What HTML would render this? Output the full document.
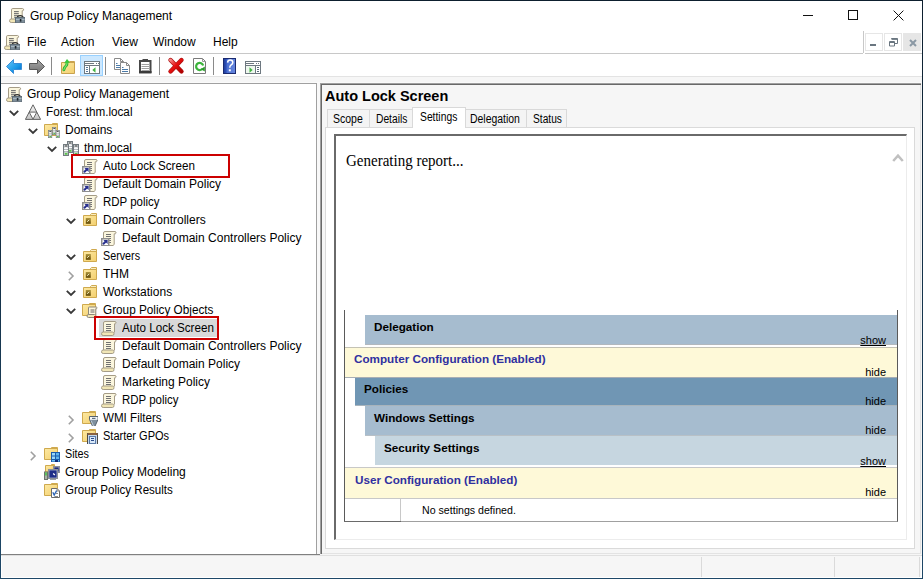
<!DOCTYPE html>
<html><head><meta charset="utf-8">
<style>
*{margin:0;padding:0;box-sizing:border-box}
html,body{width:923px;height:579px;overflow:hidden;background:#fff}
body{font-family:"Liberation Sans",sans-serif;font-size:12px;color:#000;position:relative}
.a{position:absolute}
.t{position:absolute;white-space:nowrap;line-height:14px}
svg{position:absolute;overflow:visible}
.tab{position:absolute;top:109px;height:18px;background:#f4f4f4;border:1px solid #d9d9d9;border-bottom:none}
.tt{position:absolute;white-space:nowrap;font-size:12px;line-height:14px;transform-origin:0 0}
.hd{position:absolute;white-space:nowrap;font-weight:bold;font-size:11.7px;line-height:14px}
.hs{position:absolute;white-space:nowrap;font-size:11px;line-height:13px;right:37px;text-align:right}
.u{text-decoration:underline}
</style></head><body>

<svg width="0" height="0" style="position:absolute">
<defs>
<linearGradient id="gfold" x1="0" y1="0" x2="1" y2="1"><stop offset="0" stop-color="#fde9a2"/><stop offset="1" stop-color="#f3cf6e"/></linearGradient>
<linearGradient id="gtab" x1="0" y1="0" x2="0" y2="1"><stop offset="0" stop-color="#fff8dc"/><stop offset="1" stop-color="#f0dc98"/></linearGradient>
<linearGradient id="gtri" x1="0" y1="0" x2="0" y2="1"><stop offset="0" stop-color="#f6f6f6"/><stop offset="1" stop-color="#c4c4c4"/></linearGradient>
<linearGradient id="gsrv" x1="0" y1="0" x2="1" y2="0"><stop offset="0" stop-color="#b4bcc0"/><stop offset="0.5" stop-color="#f2f4f5"/><stop offset="1" stop-color="#a4acb2"/></linearGradient>
<linearGradient id="gou" x1="0" y1="0" x2="0" y2="1"><stop offset="0" stop-color="#b09840"/><stop offset="1" stop-color="#5e4604"/></linearGradient>
<symbol id="scroll" viewBox="0 0 16 16">
 <path d="M2.5 12.5V3Q2.5 1.5 4 1.5H14Q15.5 1.8 15 3.2Q14.6 4 13.5 3.8V12.5" fill="#fbf6de" stroke="#a59c86"/>
 <rect x="0.5" y="12" width="12.5" height="3.5" rx="1.7" fill="#f1e6b6" stroke="#a59c86"/>
 <path d="M5 4.5h5M5 6.5h5M5 8.5h5M5 10.5h5" stroke="#727272"/>
</symbol>
<symbol id="link" viewBox="0 0 16 16">
 <path d="M2.5 15.5V3Q2.5 1.5 4 1.5H14Q15.5 1.8 15 3.2Q14.6 4 13.2 3.8V14.5L12 15.5Z" fill="#fbf6de" stroke="#a59c86"/>
 <path d="M5 4.5h5M5 6.5h5M8 8.5h2M8 10.5h2M8 12.5h2" stroke="#727272"/>
 <rect x="0.75" y="8.75" width="7" height="7" fill="#fff" stroke="#8e8e8e" stroke-width="1.5"/>
 <path d="M2 14.3L5 11.3" stroke="#28308e" stroke-width="2"/>
 <path d="M2.4 9.9H6.6V14.1Z" fill="#28308e"/>
</symbol>
<symbol id="folder" viewBox="0 0 16 16">
 <path d="M8.5 2.5L9.5 1.5H14.5V4H8.5Z" fill="url(#gtab)" stroke="#cfa94e"/>
 <path d="M1.5 3.5H14.5V13.5H1.5Z" fill="url(#gfold)" stroke="#cfa94e"/>
</symbol>
<symbol id="ou" viewBox="0 0 16 16">
 <use href="#folder" width="16" height="16"/>
 <rect x="3.8" y="6" width="5" height="5.8" fill="url(#gou)"/>
 <path d="M5.2 9.8L7.2 7.8" stroke="#f4ecc0" stroke-width="1"/>
</symbol>
<symbol id="srv" viewBox="0 0 6 12">
 <rect x="0.5" y="0.5" width="5" height="11" fill="url(#gsrv)" stroke="#737b80"/>
 <rect x="1.6" y="1.4" width="2.8" height="1.1" rx="0.5" fill="#262626"/>
 <path d="M1 4.3H5M1 6.5H5" stroke="#ffffff" stroke-width="1.2"/>
 <path d="M1 5.4H5M1 7.6H5" stroke="#8d969c" stroke-width="0.6"/>
 <rect x="1.8" y="8.8" width="2.6" height="2" fill="#5cc24c"/>
</symbol>
<symbol id="gpm" viewBox="0 0 16 16">
 <path d="M2.5 12.5V2.8Q2.5 1.5 3.8 1.5H13.6Q15 1.8 14.6 3.2Q14.2 4 13.2 3.8V11" fill="#fbf6de" stroke="#a59c86"/>
 <rect x="0.5" y="12" width="8" height="3.5" rx="1.7" fill="#f1e6b6" stroke="#a59c86"/>
 <path d="M5 4.6h4.8M5 6.4h4.8M5 8.3h4.8M5 10.2h3" stroke="#6a6a6a"/>
 <path d="M8.6 10.5V9.6Q11.2 7.6 13.8 9.6V10.5" stroke="#2e2e2e" stroke-width="1.2" fill="none"/>
 <rect x="6.5" y="10.5" width="9.5" height="5.3" fill="#7e8e9a" stroke="#5e6c76"/>
 <path d="M7 12.5H15.5" stroke="#a8b8c2"/>
 <rect x="10.8" y="12" width="1.6" height="2.6" fill="#1e262c"/>
</symbol>
<symbol id="forest" viewBox="0 0 16 16">
 <path d="M8 0.8L15.6 15.4H0.4Z" fill="url(#gtri)" stroke="#646464" stroke-linejoin="round"/>
 <path d="M4.2 8.1H11.8L8 15.2Z" fill="#fff" stroke="#646464"/>
</symbol>
<symbol id="domain" viewBox="0 0 16 16">
 <use href="#srv" x="4" y="1" width="6" height="12"/>
 <use href="#srv" x="0" y="4" width="6" height="12"/>
 <use href="#srv" x="10" y="4" width="6" height="12"/>
</symbol>
<symbol id="domains" viewBox="0 0 16 16">
 <path d="M7.5 2.5L8.5 1.5H13.5V4H7.5Z" fill="url(#gtab)" stroke="#cfa94e"/>
 <path d="M0.5 2.5H13.5V13.5H0.5Z" fill="url(#gfold)" stroke="#cfa94e"/>
 <use href="#srv" x="8" y="5" width="4.5" height="8"/>
 <use href="#srv" x="4" y="8" width="4.5" height="8"/>
 <use href="#srv" x="11.5" y="8" width="4.5" height="8"/>
</symbol>
<symbol id="gpofold" viewBox="0 0 16 16">
 <path d="M6.5 2.5L7.5 1.5H13.5V4.5H6.5Z" fill="url(#gtab)" stroke="#cfa94e"/>
 <path d="M0.5 2.5H13.5V13.5H0.5Z" fill="url(#gfold)" stroke="#cfa94e"/>
 <path d="M6.5 13V5.8Q6.5 5 7.3 5H14.3Q15.4 5.3 15 6.3Q14.7 6.8 13.8 6.7V13" fill="#fbf6de" stroke="#8e887a"/>
 <rect x="5" y="12.5" width="9" height="3" rx="1.5" fill="#f1e6b6" stroke="#8e887a"/>
 <path d="M8.5 8h4M8.5 10h4" stroke="#6a6a6a"/>
</symbol>
<symbol id="wmi" viewBox="0 0 16 16">
 <path d="M6.5 2.5L7.5 1.5H13.5V4.5H6.5Z" fill="url(#gtab)" stroke="#cfa94e"/>
 <path d="M0.5 2.5H13.5V13.5H0.5Z" fill="url(#gfold)" stroke="#cfa94e"/>
 <path d="M7.5 6.5H16V9.5L12.6 17H10.9L7.5 9.5Z" fill="#7f909e" stroke="#56636e" stroke-linejoin="round"/>
 <path d="M9 10.5L11.5 16" stroke="#c0ccd6" stroke-width="1"/>
 <rect x="8" y="7" width="7.5" height="2.8" fill="#f6f8fa"/>
 <path d="M10 8.4H13.5" stroke="#607080" stroke-width="1.2"/>
</symbol>
<symbol id="starter" viewBox="0 0 16 16">
 <path d="M6.5 2.5L7.5 1.5H13.5V4.5H6.5Z" fill="url(#gtab)" stroke="#cfa94e"/>
 <path d="M0.5 2.5H13.5V13.5H0.5Z" fill="url(#gfold)" stroke="#cfa94e"/>
 <rect x="5.5" y="5.5" width="10" height="11" fill="#c8d8ea" stroke="#4a4a4a"/>
 <rect x="5.5" y="5" width="10" height="2" fill="#8a6240"/>
 <rect x="7.5" y="8.5" width="6" height="7" fill="#d8e8f8" stroke="#5a7aa8"/>
 <path d="M9 10.5H12M9 12.5H12" stroke="#2a4a8a" stroke-width="1.2"/>
</symbol>
<symbol id="sites" viewBox="0 0 16 16">
 <path d="M6.5 2.5L7.5 1.5H13.5V4.5H6.5Z" fill="url(#gtab)" stroke="#cfa94e"/>
 <path d="M0.5 2.5H13.5V13.5H0.5Z" fill="url(#gfold)" stroke="#cfa94e"/>
 <rect x="7" y="6" width="9" height="10" fill="#1a5cac"/>
 <rect x="8" y="7" width="3" height="2.5" fill="#9ad8fa"/><rect x="12" y="7" width="3" height="2.5" fill="#5fb4ec"/>
 <rect x="8" y="10.5" width="3" height="2.5" fill="#9ad8fa"/><rect x="12" y="10.5" width="3" height="2.5" fill="#5fb4ec"/>
 <rect x="8" y="14" width="7" height="1.5" fill="#6cc0f0"/><rect x="11" y="14" width="3" height="2" fill="#0c2a7a"/>
</symbol>
<symbol id="model" viewBox="0 0 16 16">
 <path d="M6.5 1.5L7.5 0.5H10.5V3H6.5Z" fill="url(#gtab)" stroke="#cfa94e"/>
 <path d="M1.5 1.5H10V8H1.5Z" fill="url(#gfold)" stroke="#cfa94e"/>
 <rect x="9.5" y="2.5" width="6" height="6" fill="#c8ccd4" stroke="#8a9098"/>
 <rect x="10.3" y="3.3" width="4.4" height="4.4" fill="#1c2a78"/>
 <rect x="4.5" y="5.5" width="9" height="9" fill="#d8dce4" stroke="#8a9098"/>
 <rect x="5.3" y="6.3" width="7.4" height="7.4" fill="#1e2e88"/>
 <path d="M9.2 9.5L10.8 11" stroke="#fff" stroke-width="1.3"/>
 <path d="M6 15.5H12" stroke="#9aa0a6"/>
 <rect x="0.5" y="8" width="3" height="7.5" fill="#a8b0a8" stroke="#6c746c"/>
 <rect x="1" y="8.5" width="2" height="3" fill="#5cc05c"/>
</symbol>
<symbol id="results" viewBox="0 0 16 16">
 <path d="M6.5 2.5L7.5 1.5H13.5V4.5H6.5Z" fill="url(#gtab)" stroke="#cfa94e"/>
 <path d="M0.5 2.5H13.5V13.5H0.5Z" fill="url(#gfold)" stroke="#cfa94e"/>
 <path d="M7.5 6.5H13L15.5 9V15.5H7.5Z" fill="#fff" stroke="#6a6a6a"/>
 <path d="M13 6.5V9H15.5" fill="none" stroke="#8a8a8a"/>
 <path d="M8.8 10.2L10.2 13L12.6 8.6" stroke="#2a64b8" stroke-width="1.3" fill="none"/>
 <path d="M11.5 11.5H14M10.5 14.5H14" stroke="#8a8a8a"/>
</symbol>
</defs></svg>

<!-- window border -->
<div class="a" style="left:0;top:0;width:923px;height:1px;background:#0d1f2e"></div>
<div class="a" style="left:0;top:0;width:1px;height:579px;background:linear-gradient(#0d1f2e,#1e4868)"></div>
<div class="a" style="left:922px;top:0;width:1px;height:579px;background:linear-gradient(#0d1f2e,#1e4868)"></div>
<div class="a" style="left:0;top:578px;width:923px;height:1px;background:#1e4868"></div>
<!-- title -->
<div class="t" style="left:30px;top:9px">Group Policy Management</div>

<!-- menu -->
<div class="t" style="left:27px;top:35px">File</div>
<div class="t" style="left:61px;top:35px">Action</div>
<div class="t" style="left:112px;top:35px">View</div>
<div class="t" style="left:153px;top:35px">Window</div>
<div class="t" style="left:213px;top:35px">Help</div>
<div class="a" style="left:1px;top:53px;width:921px;height:1px;background:#c8c8c8"></div>

<!-- band -->
<div class="a" style="left:1px;top:76px;width:921px;height:7px;background:#f6f6f6;border-top:1px solid #e3e3e3;border-bottom:1px solid #fafafa"></div>

<!-- left pane -->
<div class="a" style="left:1px;top:83px;width:316px;height:472px;background:#fff;border:1px solid #a0a0a0;border-left:none"></div>
<div class="a" style="left:317px;top:83px;width:3px;height:472px;background:#f8f8f8"></div>
<div class="a" style="left:99px;top:319px;width:118px;height:18px;background:#d9d9d9"></div>
<svg style="left:6px;top:86px" width="16" height="16"><use href="#gpm" width="16" height="16"/></svg>
<div class="t" style="left:27px;top:85px;line-height:18px">Group Policy Management</div>
<svg style="left:9px;top:110px" width="11" height="7"><path d="M0.8 0.8L5 5L9.2 0.8" stroke="#383838" stroke-width="1.8" fill="none"/></svg>
<svg style="left:25px;top:104px" width="16" height="16"><use href="#forest" width="16" height="16"/></svg>
<div class="t" style="left:46px;top:103px;line-height:18px;transform:scaleX(0.975);transform-origin:0 0">Forest: thm.local</div>
<svg style="left:28px;top:128px" width="11" height="7"><path d="M0.8 0.8L5 5L9.2 0.8" stroke="#383838" stroke-width="1.8" fill="none"/></svg>
<svg style="left:44px;top:122px" width="16" height="16"><use href="#domains" width="16" height="16"/></svg>
<div class="t" style="left:65px;top:121px;line-height:18px">Domains</div>
<svg style="left:47px;top:146px" width="11" height="7"><path d="M0.8 0.8L5 5L9.2 0.8" stroke="#383838" stroke-width="1.8" fill="none"/></svg>
<svg style="left:63px;top:140px" width="16" height="16"><use href="#domain" width="16" height="16"/></svg>
<div class="t" style="left:84px;top:139px;line-height:18px">thm.local</div>
<svg style="left:82px;top:158px" width="16" height="16"><use href="#link" width="16" height="16"/></svg>
<div class="t" style="left:103px;top:157px;line-height:18px;transform:scaleX(0.97);transform-origin:0 0">Auto Lock Screen</div>
<svg style="left:82px;top:176px" width="16" height="16"><use href="#link" width="16" height="16"/></svg>
<div class="t" style="left:103px;top:175px;line-height:18px">Default Domain Policy</div>
<svg style="left:82px;top:194px" width="16" height="16"><use href="#link" width="16" height="16"/></svg>
<div class="t" style="left:103px;top:193px;line-height:18px;transform:scaleX(0.955);transform-origin:0 0">RDP policy</div>
<svg style="left:66px;top:218px" width="11" height="7"><path d="M0.8 0.8L5 5L9.2 0.8" stroke="#383838" stroke-width="1.8" fill="none"/></svg>
<svg style="left:82px;top:212px" width="16" height="16"><use href="#ou" width="16" height="16"/></svg>
<div class="t" style="left:103px;top:211px;line-height:18px">Domain Controllers</div>
<svg style="left:101px;top:230px" width="16" height="16"><use href="#link" width="16" height="16"/></svg>
<div class="t" style="left:122px;top:229px;line-height:18px">Default Domain Controllers Policy</div>
<svg style="left:66px;top:254px" width="11" height="7"><path d="M0.8 0.8L5 5L9.2 0.8" stroke="#383838" stroke-width="1.8" fill="none"/></svg>
<svg style="left:82px;top:248px" width="16" height="16"><use href="#ou" width="16" height="16"/></svg>
<div class="t" style="left:103px;top:247px;line-height:18px;transform:scaleX(0.895);transform-origin:0 0">Servers</div>
<svg style="left:68px;top:271px" width="7" height="11"><path d="M0.8 0.8L5 5L0.8 9.2" stroke="#a0a0a0" stroke-width="1.6" fill="none"/></svg>
<svg style="left:82px;top:266px" width="16" height="16"><use href="#ou" width="16" height="16"/></svg>
<div class="t" style="left:103px;top:265px;line-height:18px">THM</div>
<svg style="left:66px;top:290px" width="11" height="7"><path d="M0.8 0.8L5 5L9.2 0.8" stroke="#383838" stroke-width="1.8" fill="none"/></svg>
<svg style="left:82px;top:284px" width="16" height="16"><use href="#ou" width="16" height="16"/></svg>
<div class="t" style="left:103px;top:283px;line-height:18px">Workstations</div>
<svg style="left:66px;top:308px" width="11" height="7"><path d="M0.8 0.8L5 5L9.2 0.8" stroke="#383838" stroke-width="1.8" fill="none"/></svg>
<svg style="left:82px;top:302px" width="16" height="16"><use href="#gpofold" width="16" height="16"/></svg>
<div class="t" style="left:103px;top:301px;line-height:18px;transform:scaleX(0.98);transform-origin:0 0">Group Policy Objects</div>
<svg style="left:101px;top:320px" width="16" height="16"><use href="#scroll" width="16" height="16"/></svg>
<div class="t" style="left:122px;top:319px;line-height:18px;transform:scaleX(0.97);transform-origin:0 0">Auto Lock Screen</div>
<svg style="left:101px;top:338px" width="16" height="16"><use href="#scroll" width="16" height="16"/></svg>
<div class="t" style="left:122px;top:337px;line-height:18px">Default Domain Controllers Policy</div>
<svg style="left:101px;top:356px" width="16" height="16"><use href="#scroll" width="16" height="16"/></svg>
<div class="t" style="left:122px;top:355px;line-height:18px">Default Domain Policy</div>
<svg style="left:101px;top:374px" width="16" height="16"><use href="#scroll" width="16" height="16"/></svg>
<div class="t" style="left:122px;top:373px;line-height:18px">Marketing Policy</div>
<svg style="left:101px;top:392px" width="16" height="16"><use href="#scroll" width="16" height="16"/></svg>
<div class="t" style="left:122px;top:391px;line-height:18px;transform:scaleX(0.955);transform-origin:0 0">RDP policy</div>
<svg style="left:68px;top:415px" width="7" height="11"><path d="M0.8 0.8L5 5L0.8 9.2" stroke="#a0a0a0" stroke-width="1.6" fill="none"/></svg>
<svg style="left:82px;top:410px" width="16" height="16"><use href="#wmi" width="16" height="16"/></svg>
<div class="t" style="left:103px;top:409px;line-height:18px;transform:scaleX(0.967);transform-origin:0 0">WMI Filters</div>
<svg style="left:68px;top:433px" width="7" height="11"><path d="M0.8 0.8L5 5L0.8 9.2" stroke="#a0a0a0" stroke-width="1.6" fill="none"/></svg>
<svg style="left:82px;top:428px" width="16" height="16"><use href="#starter" width="16" height="16"/></svg>
<div class="t" style="left:103px;top:427px;line-height:18px;transform:scaleX(0.917);transform-origin:0 0">Starter GPOs</div>
<svg style="left:30px;top:451px" width="7" height="11"><path d="M0.8 0.8L5 5L0.8 9.2" stroke="#a0a0a0" stroke-width="1.6" fill="none"/></svg>
<svg style="left:44px;top:446px" width="16" height="16"><use href="#sites" width="16" height="16"/></svg>
<div class="t" style="left:65px;top:445px;line-height:18px;transform:scaleX(0.9);transform-origin:0 0">Sites</div>
<svg style="left:44px;top:464px" width="16" height="16"><use href="#model" width="16" height="16"/></svg>
<div class="t" style="left:65px;top:463px;line-height:18px">Group Policy Modeling</div>
<svg style="left:44px;top:482px" width="16" height="16"><use href="#results" width="16" height="16"/></svg>
<div class="t" style="left:65px;top:481px;line-height:18px;transform:scaleX(0.962);transform-origin:0 0">Group Policy Results</div>
<div class="a" style="left:71px;top:154px;width:159px;height:24px;border:2px solid #cc0000"></div>
<div class="a" style="left:94px;top:316px;width:125px;height:24px;border:2px solid #cc0000"></div>

<!-- right pane -->
<div class="a" style="left:320px;top:83px;width:602px;height:472px;background:#f6f6f6"></div>
<div class="a" style="left:320px;top:83px;width:601px;height:1px;background:#a0a0a0"></div>
<div class="a" style="left:320px;top:83px;width:1px;height:471px;background:#a0a0a0"></div>
<div class="a" style="left:321px;top:84px;width:600px;height:1px;background:#696969"></div>
<div class="a" style="left:321px;top:84px;width:1px;height:470px;background:#696969"></div>
<div class="a" style="left:920px;top:85px;width:1px;height:469px;background:#e3e3e3"></div>
<div class="a" style="left:322px;top:553px;width:599px;height:1px;background:#e3e3e3"></div>
<div class="t" style="left:325px;top:88px;font-weight:bold;font-size:14.5px;line-height:16px">Auto Lock Screen</div>

<!-- tab page -->
<div class="a" style="left:325px;top:127px;width:590px;height:422px;background:#fff;border:1px solid #dadada"></div>
<div class="tab" style="left:327px;width:43px"></div>
<div class="tab" style="left:369px;width:44px"></div>
<div class="tab" style="left:465px;width:62px"></div>
<div class="tab" style="left:526px;width:41px"></div>
<div class="a" style="left:412px;top:107px;width:54px;height:21px;background:#fff;border:1px solid #d9d9d9;border-bottom:none"></div>
<div class="tt" style="left:333px;top:112px;transform:scaleX(0.875)">Scope</div>
<div class="tt" style="left:376px;top:112px;transform:scaleX(0.855)">Details</div>
<div class="tt" style="left:420px;top:110px;transform:scaleX(0.86)">Settings</div>
<div class="tt" style="left:470px;top:112px;transform:scaleX(0.87)">Delegation</div>
<div class="tt" style="left:533px;top:112px;transform:scaleX(0.85)">Status</div>

<!-- report box -->
<div class="a" style="left:334px;top:134px;width:573px;height:406px;background:#fff;border-top:2px solid #6a6a6a;border-left:2px solid #6a6a6a;border-right:1px solid #ececec;border-bottom:1px solid #ececec"></div>
<div class="t" style="left:346px;top:152px;font-family:'Liberation Serif',serif;font-size:16px;line-height:18px;transform:scaleX(0.9375);transform-origin:0 0">Generating report...</div>
<svg style="left:892px;top:152px" width="12" height="11"><path d="M1.2 9L6 3.6L10.8 9" stroke="#c0c0c0" stroke-width="2.5" fill="none"/></svg>

<!-- report table -->
<div class="a" style="left:344px;top:310px;width:554px;height:212px;border-left:1px solid #5a5a5a;border-right:1px solid #5a5a5a;border-bottom:1px solid #a0a0a0"></div>
<div class="a" style="left:365px;top:315px;width:532px;height:30px;background:#a6bccf;border-bottom:1px solid #b2b8be"></div>
<div class="hd" style="left:374px;top:320px">Delegation</div>
<div class="hs u" style="top:334px">show</div>

<div class="a" style="left:345px;top:347px;width:552px;height:31px;background:#fef9d8;border-top:1px solid #c4c2b4;border-bottom:1px solid #a8aeb4"></div>
<div class="hd" style="left:354px;top:352px;color:#3030a0">Computer Configuration (Enabled)</div>
<div class="hs" style="top:366px">hide</div>

<div class="a" style="left:355px;top:378px;width:542px;height:28px;background:#7096b4;border-bottom:1px solid #a8b4bc"></div>
<div class="hd" style="left:364px;top:382px">Policies</div>
<div class="hs" style="top:395px">hide</div>

<div class="a" style="left:365px;top:406px;width:532px;height:30px;background:#a6bccf;border-bottom:1px solid #b8c0c6"></div>
<div class="hd" style="left:374px;top:411px">Windows Settings</div>
<div class="hs" style="top:424px">hide</div>

<div class="a" style="left:375px;top:436px;width:522px;height:29px;background:#c6d6e0"></div>
<div class="hd" style="left:384px;top:441px">Security Settings</div>
<div class="hs u" style="top:455px">show</div>

<div class="a" style="left:345px;top:467px;width:552px;height:32px;background:#fef9d8;border-top:1px solid #c8c8c8;border-bottom:1px solid #c8c8c8"></div>
<div class="hd" style="left:355px;top:473px;color:#3030a0">User Configuration (Enabled)</div>
<div class="hs" style="top:486px">hide</div>

<div class="a" style="left:400px;top:499px;width:1px;height:22px;background:#c8c8c8"></div>
<div class="a" style="left:344px;top:521px;width:57px;height:1px;background:#6a6a6a"></div>
<div class="t" style="left:422px;top:503px;font-size:11px;transform:scaleX(0.965);transform-origin:0 0">No settings defined.</div>

<!-- status bar -->
<div class="a" style="left:1px;top:555px;width:921px;height:22px;background:#f6f6f6;border-top:1px solid #e0e0e0"></div>
<div class="a" style="left:1px;top:554px;width:319px;height:1px;background:#808080"></div>
<div class="a" style="left:701px;top:557px;width:1px;height:21px;background:#dadada"></div>
<div class="a" style="left:834px;top:557px;width:1px;height:21px;background:#dadada"></div>
<div class="a" style="left:919px;top:557px;width:1px;height:21px;background:#dadada"></div>
<div class="a" style="left:1px;top:577px;width:921px;height:1px;background:#fff"></div>
<div class="a" style="left:1px;top:556px;width:1px;height:22px;background:#fff"></div>
<div class="a" style="left:921px;top:556px;width:1px;height:22px;background:#fff"></div>
<!-- title icon -->
<svg style="left:9px;top:7px" width="16" height="16"><use href="#gpm" width="16" height="16"/></svg>
<svg style="left:4px;top:34px" width="16" height="16"><use href="#gpm" width="16" height="16"/></svg>
<!-- window controls -->
<div class="a" style="left:803px;top:15px;width:10px;height:1px;background:#111"></div>
<div class="a" style="left:848px;top:10px;width:10px;height:10px;border:1px solid #111"></div>
<svg style="left:893px;top:10px" width="11" height="11"><path d="M0.6 0.6L10.4 10.4M10.4 0.6L0.6 10.4" stroke="#111" stroke-width="1"/></svg>
<!-- MDI -->
<div class="a" style="left:863px;top:31px;width:1px;height:23px;background:#c8c8c8"></div>
<div class="a" style="left:863px;top:53px;width:2px;height:1px;background:#fff"></div>
<div class="a" style="left:865px;top:33px;width:18px;height:18px;border:1px solid #e6e6e6"></div>
<div class="a" style="left:884px;top:33px;width:18px;height:18px;border:1px solid #e6e6e6"></div>
<div class="a" style="left:903px;top:33px;width:18px;height:18px;background:#e6e6e6"></div>
<div class="a" style="left:870px;top:44px;width:6px;height:2px;background:#6a7680"></div>
<svg style="left:889px;top:38px" width="9" height="9"><path d="M0.5 3.5H5.5V8H0.5Z" fill="none" stroke="#6a7680"/><path d="M0.5 4.5H5.5" stroke="#6a7680"/><path d="M2.5 1V0.5H8.5V5.5H6" fill="none" stroke="#6a7680"/><path d="M2.5 1.2H8.5" stroke="#6a7680" stroke-width="1.4"/></svg>
<svg style="left:909px;top:39px" width="8" height="8"><path d="M1 1L7 7M7 1L1 7" stroke="#8a98a4" stroke-width="2"/></svg>

<!-- toolbar -->
<svg style="left:0;top:54px" width="270" height="22">
 <defs>
  <linearGradient id="gblue" x1="0" y1="0" x2="1" y2="1"><stop offset="0" stop-color="#6cc8f8"/><stop offset="0.6" stop-color="#1c9ae8"/><stop offset="1" stop-color="#0064c0"/></linearGradient>
  <linearGradient id="ggrey" x1="0" y1="0" x2="0" y2="1"><stop offset="0" stop-color="#a8a8a8"/><stop offset="1" stop-color="#707070"/></linearGradient>
  <linearGradient id="ghelp" x1="0" y1="0" x2="1" y2="0"><stop offset="0" stop-color="#1e3a94"/><stop offset="0.25" stop-color="#2c4fb8"/><stop offset="0.3" stop-color="#4a6ed0"/><stop offset="1" stop-color="#6a8ae0"/></linearGradient>
 </defs>
 <!-- back -->
 <path d="M6.5 12.5L13.5 5.5V9.5H21.5V15.5H13.5V19.5Z" fill="url(#gblue)" stroke="#3a8ed8" stroke-linejoin="round"/>
 <!-- forward -->
 <path d="M44.5 12.5L37.5 5.5V9.5H29.5V15.5H37.5V19.5Z" fill="url(#ggrey)" stroke="#585858" stroke-linejoin="round"/>
 <rect x="51" y="3" width="1" height="18" fill="#8a8a8a"/>
  <!-- folder up -->
 <path d="M68.5 8.5L69.5 7.5H74.5V10H68.5Z" fill="url(#gtab)" stroke="#c9a24e"/>
 <path d="M61.5 8.5H74.5V19.5H61.5Z" fill="url(#gfold)" stroke="#c9a24e"/>
 <path d="M63.8 15.8Q64.5 13 66.3 11.5Q67.2 10.5 67 8" stroke="#2aa82a" stroke-width="2.8" fill="none" stroke-linecap="round"/>
 <path d="M63.8 15.8Q64.5 13 66.3 11.5Q67.2 10.5 67 8" stroke="#6ee86e" stroke-width="1.2" fill="none" stroke-linecap="round"/>
 <path d="M64.2 9.2L67 5L70 8.6Z" fill="#3cc83c"/>
 <!-- highlighted -->
 <rect x="80.5" y="1.5" width="22" height="20" fill="#cce8ff" stroke="#99d1ff"/>
 <rect x="84.5" y="7.5" width="15" height="12" fill="#fff" stroke="#6e7880"/>
 <path d="M85 9.5H94" stroke="#6e7880"/>
 <path d="M96 9.5H97M98 9.5H99" stroke="#6e7880"/>
 <path d="M85 11.5H99" stroke="#6e7880"/>
 <path d="M89.5 12V19" stroke="#6e7880"/>
 <path d="M86 13.5h2M86 15.5h2M86 17.5h2" stroke="#5a7a9a"/>
 <path d="M95.5 13.3V18.7L92.3 16Z" fill="#42b442"/>
 <rect x="105" y="3" width="1" height="18" fill="#8a8a8a"/>
 <!-- copy -->
 <path d="M114.5 4.5H120.5L123.5 7.5V15.5H114.5Z" fill="#fff" stroke="#8a8a8a"/>
 <path d="M120.5 4.5V7.5H123.5" fill="none" stroke="#8a8a8a"/>
 <path d="M116 9.5H117.5M116 11.5H121M116 13.5H121" stroke="#4a7aa8"/>
 <path d="M120.5 8.5H126.5L129.5 11.5V19.5H120.5Z" fill="#fff" stroke="#8a8a8a"/>
 <path d="M126.5 8.5V11.5H129.5" fill="none" stroke="#8a8a8a"/>
 <path d="M122 13.5H123.5M122 15.5H128M122 17.5H128" stroke="#4a7aa8"/>
 <!-- clipboard -->
 <rect x="140" y="7" width="10.5" height="11.5" fill="#fff" stroke="#484848" stroke-width="2"/>
 <rect x="139" y="17" width="12.5" height="2" fill="#3a3a3a"/>
 <rect x="142.5" y="5" width="5.5" height="2.5" fill="#484848"/>
 <path d="M141.5 10.5H149M141.5 12.5H149M141.5 14.5H149M141.5 16.5H149" stroke="#a0a0a0"/>
 <rect x="159" y="3" width="1" height="18" fill="#8a8a8a"/>
 <!-- delete -->
 <defs><linearGradient id="gred" x1="0" y1="0" x2="1" y2="1"><stop offset="0" stop-color="#f48a8a"/><stop offset="0.45" stop-color="#e81010"/><stop offset="1" stop-color="#b00000"/></linearGradient></defs>
 <path d="M170.5 6L181.5 17.5M181.5 6L170.5 17.5" stroke="#b01010" stroke-width="4.4" stroke-linecap="round"/>
 <path d="M170.5 6L181.5 17.5M181.5 6L170.5 17.5" stroke="url(#gred)" stroke-width="3" stroke-linecap="round"/>
 <!-- refresh doc -->
 <path d="M193.5 4.5H202.5L205.5 7.5V19.5H193.5Z" fill="#fff" stroke="#7a7a7a"/>
 <path d="M202.5 4.5V7.5H205.5" fill="none" stroke="#9a9a9a"/>
 <path d="M202.6 14.6A3.6 3.6 0 1 1 203.2 11.5" stroke="#3cb43c" stroke-width="2.2" fill="none"/>
 <path d="M200.8 15.2L204.8 12.6L204.8 17.4Z" fill="#2a9a2a"/>
 <rect x="213" y="3" width="1" height="18" fill="#8a8a8a"/>
 <!-- help -->
 <rect x="223" y="4" width="13" height="16" fill="url(#ghelp)"/>
 <rect x="223.5" y="4.5" width="12" height="15" fill="none" stroke="#1a2a70"/>
 <path d="M227.6 8.6Q227.8 6 230.2 6Q232.8 6 232.8 8.4Q232.8 10 231 11Q229.8 11.8 229.8 13.8" stroke="#fff" stroke-width="1.5" fill="none"/>
 <rect x="228.8" y="15.3" width="2" height="2" fill="#fff"/>
 <!-- action pane -->
 <rect x="245.5" y="7.5" width="15" height="12" fill="#fff" stroke="#6e7880"/>
 <path d="M246 9.5H254" stroke="#6e7880"/>
 <path d="M256 9.5H257M258 9.5H259" stroke="#6e7880"/>
 <path d="M246 11.5H260" stroke="#6e7880"/>
 <path d="M255.5 12V19" stroke="#6e7880"/>
 <rect x="246" y="12" width="9" height="7" fill="#eef8ee"/>
 <path d="M257 13.5h2M257 15.5h2M257 17.5h2" stroke="#5a6a7a"/>
 <path d="M249.5 13.3V18.7L252.7 16Z" fill="#42b442"/>
</svg>

</body></html>
